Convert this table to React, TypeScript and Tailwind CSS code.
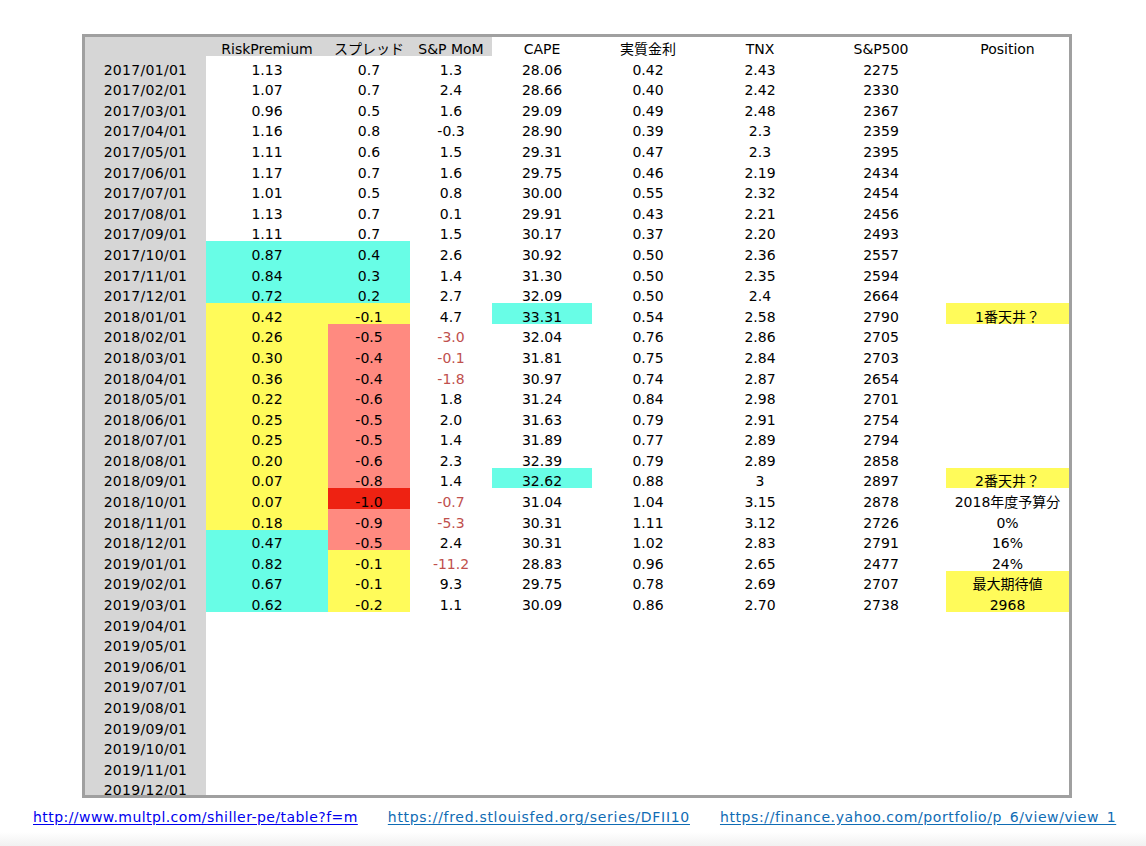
import React from "react";

const widths = [
  "w-[121px]",
  "w-[122px]",
  "w-[82px]",
  "w-[82px]",
  "w-[100px]",
  "w-[112px]",
  "w-[112px]",
  "w-[130px]",
  "w-[123px]",
];

const fills: Record<string, string> = {
  c: "bg-[#68fde6]",
  y: "bg-[#fffb5a]",
  r: "bg-[#ff8a80]",
  d: "bg-[#ee2212]",
};

const header = ["", "RiskPremium", "スプレッド", "S&P MoM", "CAPE", "実質金利", "TNX", "S&P500", "Position"];

// "value|code" : c/y/r/d = cell fill, n = red number
const data: string[][] = [
  ["2017/01/01", "1.13", "0.7", "1.3", "28.06", "0.42", "2.43", "2275", ""],
  ["2017/02/01", "1.07", "0.7", "2.4", "28.66", "0.40", "2.42", "2330", ""],
  ["2017/03/01", "0.96", "0.5", "1.6", "29.09", "0.49", "2.48", "2367", ""],
  ["2017/04/01", "1.16", "0.8", "-0.3", "28.90", "0.39", "2.3", "2359", ""],
  ["2017/05/01", "1.11", "0.6", "1.5", "29.31", "0.47", "2.3", "2395", ""],
  ["2017/06/01", "1.17", "0.7", "1.6", "29.75", "0.46", "2.19", "2434", ""],
  ["2017/07/01", "1.01", "0.5", "0.8", "30.00", "0.55", "2.32", "2454", ""],
  ["2017/08/01", "1.13", "0.7", "0.1", "29.91", "0.43", "2.21", "2456", ""],
  ["2017/09/01", "1.11", "0.7", "1.5", "30.17", "0.37", "2.20", "2493", ""],
  ["2017/10/01", "0.87|c", "0.4|c", "2.6", "30.92", "0.50", "2.36", "2557", ""],
  ["2017/11/01", "0.84|c", "0.3|c", "1.4", "31.30", "0.50", "2.35", "2594", ""],
  ["2017/12/01", "0.72|c", "0.2|c", "2.7", "32.09", "0.50", "2.4", "2664", ""],
  ["2018/01/01", "0.42|y", "-0.1|y", "4.7", "33.31|c", "0.54", "2.58", "2790", "1番天井？|y"],
  ["2018/02/01", "0.26|y", "-0.5|r", "-3.0|n", "32.04", "0.76", "2.86", "2705", ""],
  ["2018/03/01", "0.30|y", "-0.4|r", "-0.1|n", "31.81", "0.75", "2.84", "2703", ""],
  ["2018/04/01", "0.36|y", "-0.4|r", "-1.8|n", "30.97", "0.74", "2.87", "2654", ""],
  ["2018/05/01", "0.22|y", "-0.6|r", "1.8", "31.24", "0.84", "2.98", "2701", ""],
  ["2018/06/01", "0.25|y", "-0.5|r", "2.0", "31.63", "0.79", "2.91", "2754", ""],
  ["2018/07/01", "0.25|y", "-0.5|r", "1.4", "31.89", "0.77", "2.89", "2794", ""],
  ["2018/08/01", "0.20|y", "-0.6|r", "2.3", "32.39", "0.79", "2.89", "2858", ""],
  ["2018/09/01", "0.07|y", "-0.8|r", "1.4", "32.62|c", "0.88", "3", "2897", "2番天井？|y"],
  ["2018/10/01", "0.07|y", "-1.0|d", "-0.7|n", "31.04", "1.04", "3.15", "2878", "2018年度予算分"],
  ["2018/11/01", "0.18|y", "-0.9|r", "-5.3|n", "30.31", "1.11", "3.12", "2726", "0%"],
  ["2018/12/01", "0.47|c", "-0.5|r", "2.4", "30.31", "1.02", "2.83", "2791", "16%"],
  ["2019/01/01", "0.82|c", "-0.1|y", "-11.2|n", "28.83", "0.96", "2.65", "2477", "24%"],
  ["2019/02/01", "0.67|c", "-0.1|y", "9.3", "29.75", "0.78", "2.69", "2707", "最大期待値|y"],
  ["2019/03/01", "0.62|c", "-0.2|y", "1.1", "30.09", "0.86", "2.70", "2738", "2968|y"],
  ["2019/04/01"],
  ["2019/05/01"],
  ["2019/06/01"],
  ["2019/07/01"],
  ["2019/08/01"],
  ["2019/09/01"],
  ["2019/10/01"],
  ["2019/11/01"],
  ["2019/12/01"],
];

const DataRow = ({ row }: { row: string[] }) => (
  <div className="flex h-[20.6px] shrink-0">
    {widths.map((w, i) => {
      const [text = "", code = ""] = (row[i] ?? "").split("|");
      const bg = i === 0 ? "bg-[#d6d6d6] tracking-[0.3px]" : fills[code] ?? "";
      const color = code === "n" ? "text-[#c0504d]" : "text-black";
      return (
        <div key={i} className={`${w} ${bg} ${color} h-full flex items-end justify-center leading-none`}>
          {text}
        </div>
      );
    })}
  </div>
);

export default function App() {
  return (
    <div className="w-[1146px] h-[846px] flex flex-col bg-white font-['DejaVu_Sans','Noto_Sans_CJK_JP',sans-serif] text-[14px]">
      <div className="pt-[34px] pl-[82px]">
        <div className="w-[990px] h-[764px] border-[3px] border-[#a0a0a0] overflow-hidden flex flex-col">
          <div className="flex h-[19px] shrink-0">
            {header.map((h, i) => (
              <div
                key={i}
                className={`${widths[i]} ${i < 4 ? "bg-[#d6d6d6]" : ""} h-full flex items-end justify-center leading-none text-black`}
              >
                {h}
              </div>
            ))}
          </div>
          {data.map((row) => (
            <DataRow key={row[0]} row={row} />
          ))}
        </div>
      </div>

      <div className="mt-[12px] h-[16px] pl-[33px] flex gap-[30px] leading-none">
        <a href="#" className="text-[#0000ee] underline underline-offset-2 tracking-[0.45px]">
          http://www.multpl.com/shiller-pe/table?f=m
        </a>
        <a href="#" className="text-[#106cb4] underline underline-offset-2 tracking-[0.7px]">
          https://fred.stlouisfed.org/series/DFII10
        </a>
        <a href="#" className="text-[#106cb4] underline underline-offset-2 tracking-[0.6px]">
          https://finance.yahoo.com/portfolio/p_6/view/view_1
        </a>
      </div>

      <div className="flex-1 mt-[6px] bg-gradient-to-b from-white to-[#f1f1f1]" />
    </div>
  );
}
